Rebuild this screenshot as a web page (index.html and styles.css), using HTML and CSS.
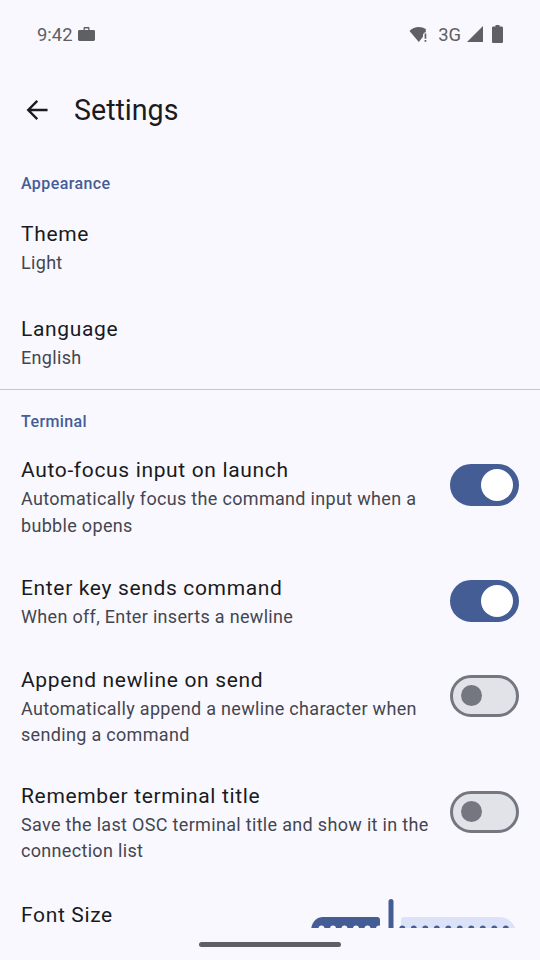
FILE: index.html
```html
<!DOCTYPE html>
<html lang="en">
<head>
    <meta charset="UTF-8">
    <meta name="viewport" content="width=device-width, initial-scale=1.0">
    <title>Settings</title>
    <link rel="stylesheet" href="styles.css">
</head>
<body>
    <div class="screen">
        <div class="status-bar">
            <div class="status-left">
                <span class="clock">9:42</span>
                <svg class="icon-work" width="19" height="16" viewBox="0 0 19 16">
                    <path fill="#5f6063" fill-rule="evenodd" d="M6.500 2.200C6.500 1.500 7 1 7.700 1h3.600c.7 0 1.200.5 1.200 1.200V4h4.100c.9 0 1.400.6 1.400 1.400v8.200c0 .8-.5 1.400-1.400 1.400H2.400c-.9 0-1.400-.6-1.400-1.400V5.400C1 4.600 1.500 4 2.400 4h4.100V2.200zM7.800 2.400V4h3.400V2.400H7.800z"/>
                </svg>
            </div>
            <div class="status-right">
                <svg class="icon-wifi" width="20" height="17" viewBox="0 0 20 17">
                    <path fill="#5f6063" d="M0.500 5C3 2.300 6.300 1 9.800 1c2.500 0 4.900.7 7 2v3.300c-1.600.2-2.800 1.400-2.800 3v1.500L9.800 16 .5 5z"/>
                    <rect fill="#5f6063" x="15.600" y="7.500" width="1.700" height="5.200"/>
                    <rect fill="#5f6063" x="15.600" y="14" width="1.700" height="1.800"/>
                </svg>
                <span class="net">3G</span>
                <svg width="16" height="16" viewBox="0 0 16 16">
                    <path fill="#5f6063" d="M0 16L16 0V16H0z"/>
                </svg>
                <svg class="icon-battery" width="11" height="18" viewBox="0 0 11 18">
                    <path fill="#5f6063" d="M3.500 0h4v1.600h2.200c.7 0 1.300.6 1.300 1.300v13.800c0 .7-.6 1.300-1.300 1.300H1.300C.6 18 0 17.400 0 16.700V2.900C0 2.200.6 1.600 1.300 1.600h2.200V0z"/>
                </svg>
            </div>
        </div>

        <div class="app-bar">
            <svg class="back" width="22" height="22" viewBox="0 0 24 24">
                <path fill="#1a1b20" d="M23.500 10.600H5.600l7.600-7.700-1.800-1.800L.6 12l10.800 10.900 1.800-1.800-7.600-7.700h17.900z"/>
            </svg>
            <h1 class="title">Settings</h1>
        </div>

        <div class="list">
            <div class="section-title first">Appearance</div>
            <div class="item item-plain">
                <div class="item-title">Theme</div>
                <div class="item-sub">Light</div>
            </div>
            <div class="item item-plain">
                <div class="item-title">Language</div>
                <div class="item-sub">English</div>
            </div>
            <div class="divider"></div>

            <div class="section-title second">Terminal</div>
            <div class="item item-switch">
                <div class="item-text">
                    <div class="item-title">Auto-focus input on launch</div>
                    <div class="item-sub">Automatically focus the command input when a bubble opens</div>
                </div>
                <div class="switch on"><span class="knob"></span></div>
            </div>
            <div class="item item-switch">
                <div class="item-text">
                    <div class="item-title">Enter key sends command</div>
                    <div class="item-sub">When off, Enter inserts a newline</div>
                </div>
                <div class="switch on raised"><span class="knob"></span></div>
            </div>
            <div class="item item-switch tight">
                <div class="item-text">
                    <div class="item-title">Append newline on send</div>
                    <div class="item-sub">Automatically append a newline character when sending a command</div>
                </div>
                <div class="switch"><span class="knob"></span></div>
            </div>
            <div class="item item-switch">
                <div class="item-text">
                    <div class="item-title">Remember terminal title</div>
                    <div class="item-sub">Save the last OSC terminal title and show it in the connection list</div>
                </div>
                <div class="switch"><span class="knob"></span></div>
            </div>
            <div class="item item-slider">
                <div class="item-title">Font Size</div>
                <svg class="slider" width="206" height="42" viewBox="0 0 206 42">
                    <path fill="#455d95" d="M0 34c0-8 5-14 12-14h54c2 0 3 1 3 3v19H0z"/>
                    <rect fill="#455d95" x="77.500" y="2" width="5" height="40" rx="2.500"/>
                    <path fill="#dce2f8" d="M90 23c0-2 1-3 3-3h95c9 0 15 6 17 13v9H90z"/>
                    <g fill="#f9f8ff">
                        <circle cx="10.500" cy="31.500" r="3"/>
                        <circle cx="22" cy="31.500" r="3"/>
                        <circle cx="33.500" cy="31.500" r="3"/>
                        <circle cx="45" cy="31.500" r="3"/>
                        <circle cx="56.500" cy="31.500" r="3"/>
                        <circle cx="68" cy="31.500" r="3"/>
                    </g>
                    <g fill="#455d95">
                        <circle cx="91.300" cy="31.500" r="3"/>
                        <circle cx="102.800" cy="31.500" r="3"/>
                        <circle cx="114.300" cy="31.500" r="3"/>
                        <circle cx="125.800" cy="31.500" r="3"/>
                        <circle cx="137.300" cy="31.500" r="3"/>
                        <circle cx="148.800" cy="31.500" r="3"/>
                        <circle cx="160.300" cy="31.500" r="3"/>
                        <circle cx="171.800" cy="31.500" r="3"/>
                        <circle cx="183.300" cy="31.500" r="3"/>
                        <circle cx="194.800" cy="31.500" r="3"/>
                    </g>
                </svg>
            </div>
        </div>

        <div class="nav-bar"><span class="nav-handle"></span></div>
    </div>
</body>
</html>
```

FILE: styles.css
```css
* {
    box-sizing: border-box;
}

html, body {
    margin: 0;
    padding: 0;
}

body {
    background-color: #f9f8ff;
    font-family: Roboto, "Liberation Sans", sans-serif;
    color: #1a1b20;
}

.screen {
    width: 540px;
    height: 960px;
    display: flex;
    flex-direction: column;
    overflow: hidden;
}

.status-bar {
    height: 68px;
    flex-shrink: 0;
    padding: 0 37px 0 37px;
    display: flex;
    justify-content: space-between;
    align-items: center;
    color: #5f6063;
    font-size: 18.400px;
}

.status-left,
.status-right {
    display: flex;
    align-items: center;
}

.status-left {
    gap: 5px;
}

.status-right {
    gap: 6px;
}

.icon-wifi {
    margin-right: 3px;
}

.icon-battery {
    margin-left: 3px;
}

.app-bar {
    height: 84px;
    flex-shrink: 0;
    padding-left: 26px;
    display: flex;
    align-items: center;
    gap: 26px;
}

.back {
    flex-shrink: 0;
}

.title {
    margin: 0;
    font-size: 28.600px;
    font-weight: 400;
}

.list {
    flex: 1;
    min-height: 0;
    overflow: hidden;
}

.section-title {
    padding: 0 21px;
    font-size: 16px;
    font-weight: 500;
    letter-spacing: 0.4px;
    line-height: 20px;
    color: #455d95;
}

.section-title.first {
    padding-top: 22px;
    margin-bottom: 2px;
}

.section-title.second {
    padding-top: 1px;
    margin-bottom: 6.500px;
}

.item {
    padding: 0 21px;
}

.item-title {
    font-size: 21px;
    line-height: 28px;
    letter-spacing: 0.65px;
}

.item-sub {
    margin-top: 2px;
    font-size: 18px;
    line-height: 26.500px;
    letter-spacing: 0.32px;
    color: #44464f;
}

.item-plain {
    padding-top: 24px;
    padding-bottom: 14.500px;
}

.divider {
    height: 1px;
    margin-top: 3px;
    margin-bottom: 21px;
    background-color: #c5c6d0;
}

.item-switch {
    display: flex;
    align-items: flex-start;
    gap: 16px;
    padding-top: 17.500px;
    padding-bottom: 17.500px;
}

.item-switch.tight {
    padding-bottom: 15.500px;
}

.item-text {
    flex: 1;
    min-width: 0;
}

.switch {
    width: 69px;
    height: 42px;
    flex-shrink: 0;
    margin-top: 9px;
    border-radius: 21px;
    background-color: #e2e2e9;
    border: 3px solid #757780;
    display: flex;
    align-items: center;
    padding-left: 8px;
}

.knob {
    width: 21px;
    height: 21px;
    border-radius: 50%;
    background-color: #757780;
}

.switch.on {
    margin-top: 8px;
    background-color: #455d95;
    border-color: #455d95;
    justify-content: flex-end;
    padding: 0 3px 0 0;
}

.switch.on.raised {
    margin-top: 6px;
}

.switch.on .knob {
    width: 32px;
    height: 32px;
    background-color: #ffffff;
}

.item-slider {
    display: flex;
    justify-content: space-between;
    align-items: flex-start;
    padding: 14.500px 23px 0 21px;
}

.item-slider .item-title {
    margin-top: 4px;
}

.slider {
    display: block;
    flex-shrink: 0;
}

.nav-bar {
    height: 32px;
    flex-shrink: 0;
    display: flex;
    justify-content: center;
    padding-top: 14px;
}

.nav-handle {
    width: 142px;
    height: 5px;
    border-radius: 3px;
    background-color: #5f6063;
}
```
